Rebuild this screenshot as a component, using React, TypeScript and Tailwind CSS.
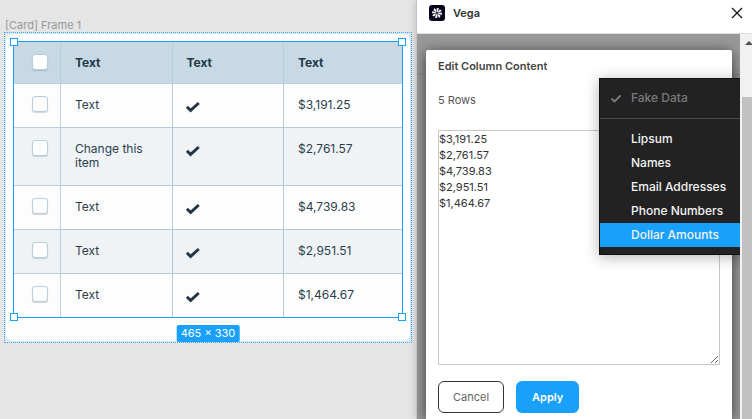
import { Check } from "lucide-react";

const rows = [
  { name: "Text", amount: "$3,191.25" },
  { name: "Change this item", amount: "$2,761.57" },
  { name: "Text", amount: "$4,739.83" },
  { name: "Text", amount: "$2,951.51" },
  { name: "Text", amount: "$1,464.67" },
];

const options = ["Lipsum", "Names", "Email Addresses", "Phone Numbers", "Dollar Amounts"];

const box =
  "block w-4 h-4 appearance-none rounded-[3px] border border-[#b7cddc] bg-[#fdfdfd] shadow-[0_1px_1px_rgba(80,110,130,0.25)]";

const Tick = () => (
  <svg viewBox="0 0 14 12" className="w-[14px] h-3" fill="none" stroke="#233746" strokeWidth="3">
    <path d="M0.8 5.8 L4.6 9.4 L12.8 2" />
  </svg>
);

const Handle = ({ className }: { className: string }) => (
  <span className={`absolute w-2 h-2 border border-[#18a0fb] bg-white ${className}`} />
);

const DataTable = () => (
  <table className="w-full table-fixed border-separate border-spacing-0 text-left align-top text-xs leading-[14px] text-[#2c3e4c]">
    <colgroup>
      <col className="w-12" />
      <col />
      <col />
      <col className="w-[119px]" />
    </colgroup>
    <thead>
      <tr className="bg-[#c7d9e5] text-[#233746] font-bold">
        <th className="h-[43px] border-r border-b border-[#b7cfdd] pl-[19px]">
          <input type="checkbox" aria-label="Select all" className={box} />
        </th>
        <th className="border-r border-b border-[#b7cfdd] pt-px pl-[14px]">Text</th>
        <th className="border-r border-b border-[#b7cfdd] pt-px pl-[14px]">Text</th>
        <th className="border-b border-[#b7cfdd] pt-px pl-[14px]">Text</th>
      </tr>
    </thead>
    <tbody>
      {rows.map((row, i) => (
        <tr key={i} className="align-top odd:bg-[#fdfdfd] even:bg-[#eff3f6]">
          <td className="border-r border-b border-[#b9d0de] pt-3 pl-[19px]">
            <input type="checkbox" aria-label={`Select row ${i + 1}`} className={box} />
          </td>
          <td className="border-r border-b border-[#b3cbd9] pt-[14px] pr-6 pb-[15px] pl-[14px]">{row.name}</td>
          <td className="border-r border-b border-[#b3cbd9] pt-[17px] pl-[13px]">
            <Tick />
          </td>
          <td className="border-b border-[#b3cbd9] pt-[14px] pb-[15px] pl-[14px]">{row.amount}</td>
        </tr>
      ))}
    </tbody>
  </table>
);

const Canvas = () => (
  <main className="flex-1 min-w-0 bg-[#e5e5e5] pt-[18px] px-[5px]">
    <h1 className="text-[11px] leading-[15px] text-[#999]">[Card] Frame 1</h1>
    <section className="outline-1 outline-dotted outline-[#3aa8f8]">
      <div className="rounded-lg bg-[#fdfdfd] pt-2 px-2 pb-6 outline-1 -outline-offset-1 outline-[#cfe6f7]">
        <div className="relative">
          <DataTable />
          <div className="pointer-events-none absolute inset-0 border border-[#18a0fb]" />
          <Handle className="-top-[3px] -left-[3px]" />
          <Handle className="-top-[3px] -right-[3px]" />
          <Handle className="-bottom-[3px] -left-[3px]" />
          <Handle className="-bottom-[3px] -right-[3px]" />
          <span className="absolute top-full left-1/2 mt-[7px] -translate-x-1/2 rounded-xs bg-[#18a0fb] px-1 text-[11px] leading-[17px] whitespace-nowrap text-white">
            465 × 330
          </span>
        </div>
      </div>
    </section>
  </main>
);

const VegaLogo = () => (
  <svg viewBox="0 0 16 16" className="w-4 h-4">
    <rect width="16" height="16" rx="3" fill="#07051c" />
    <g fill="#fff">
      {[10, 55, 100, 145, 190, 235, 280, 325].map((angle) => (
        <path key={angle} d="M8 7.4 L6.7 3.6 L8.9 2.6 L8.9 5.6 Z" transform={`rotate(${angle} 8 8)`} />
      ))}
    </g>
  </svg>
);

const FakeDataMenu = () => (
  <ul className="absolute top-7 -right-4 w-[149px] border border-[#111] bg-[#222] pt-[7px] pb-[7px] text-xs font-medium text-[#f2f2f2] shadow-[0_2px_14px_rgba(0,0,0,0.3)]">
    <li className="relative mb-2 border-b border-[#4a4a4a] pb-2">
      <Check className="absolute top-[7px] left-[10px] w-3 h-3 text-[#777]" strokeWidth={4} />
      <button type="button" className="block h-6 w-full pl-[31px] text-left text-[#7a7a7a]">
        Fake Data
      </button>
    </li>
    {options.map((option) => (
      <li key={option} className="last:bg-[#18a0fb]">
        <button type="button" className="block h-6 w-full pl-[31px] text-left">
          {option}
        </button>
      </li>
    ))}
  </ul>
);

const EditColumn = () => (
  <form className="relative ml-[9px] mr-2 mt-4 flex-1 rounded-t-xs bg-white px-3 pt-2 shadow-[0_2px_14px_rgba(0,0,0,0.6)]">
    <h2 className="text-[11px] leading-4 font-semibold text-[#444]">Edit Column Content</h2>
    <label htmlFor="rows" className="mt-[18px] block text-[11px] leading-4 text-[#555]">
      5 Rows
    </label>
    <textarea
      id="rows"
      className="mt-[22px] block h-[235px] w-full border border-[#c8c8c8] text-[11px] leading-4 text-[#333]"
      defaultValue={rows.map((row) => row.amount).join("\n")}
    />
    <div className="mt-4 flex gap-3 text-[11px]">
      <button type="button" className="h-8 rounded-md border border-[#333] px-[14px] text-[#666]">
        Cancel
      </button>
      <button type="submit" className="h-8 rounded-md bg-[#18a0fb] px-4 font-semibold text-white">
        Apply
      </button>
    </div>
    <FakeDataMenu />
  </form>
);

const Plugin = () => (
  <aside className="flex w-[336px] flex-col border-l border-[#c4c4c4] bg-white shadow-[0_0_8px_rgba(0,0,0,0.2)]">
    <header className="flex h-[34px] items-center gap-2 border-b border-[#ddd] pb-[7px] pr-2 pl-3">
      <VegaLogo />
      <span className="flex-1 text-[11px] font-semibold text-[#333]">Vega</span>
      <button type="button" aria-label="Close">
        <svg viewBox="0 0 14 14" className="h-[14px] w-[14px]" stroke="#111" strokeWidth="1.2">
          <path d="M2 2 L12 12 M12 2 L2 12" />
        </svg>
      </button>
    </header>
    <div className="flex min-h-0 flex-1">
      <div className="flex min-w-0 flex-1 flex-col overflow-hidden bg-[linear-gradient(#999_40px,#8b8b8b_40px,#8b8b8b_41px,#999_41px)]">
        <EditColumn />
      </div>
      <div className="flex w-3 flex-col bg-[#f1f1f1] pl-0.5">
        <svg viewBox="0 0 10 10" className="mt-[3px] ml-[3px] w-[10px] h-[10px]">
          <path d="M0 8 L4 4 L8 8 Z" fill="#505050" />
        </svg>
        <div className="mt-[50px] flex-1 bg-[#c1c1c1]" />
      </div>
    </div>
  </aside>
);

export default function App() {
  return (
    <div className="flex h-screen overflow-hidden font-[Inter,sans-serif]">
      <Canvas />
      <Plugin />
    </div>
  );
}
